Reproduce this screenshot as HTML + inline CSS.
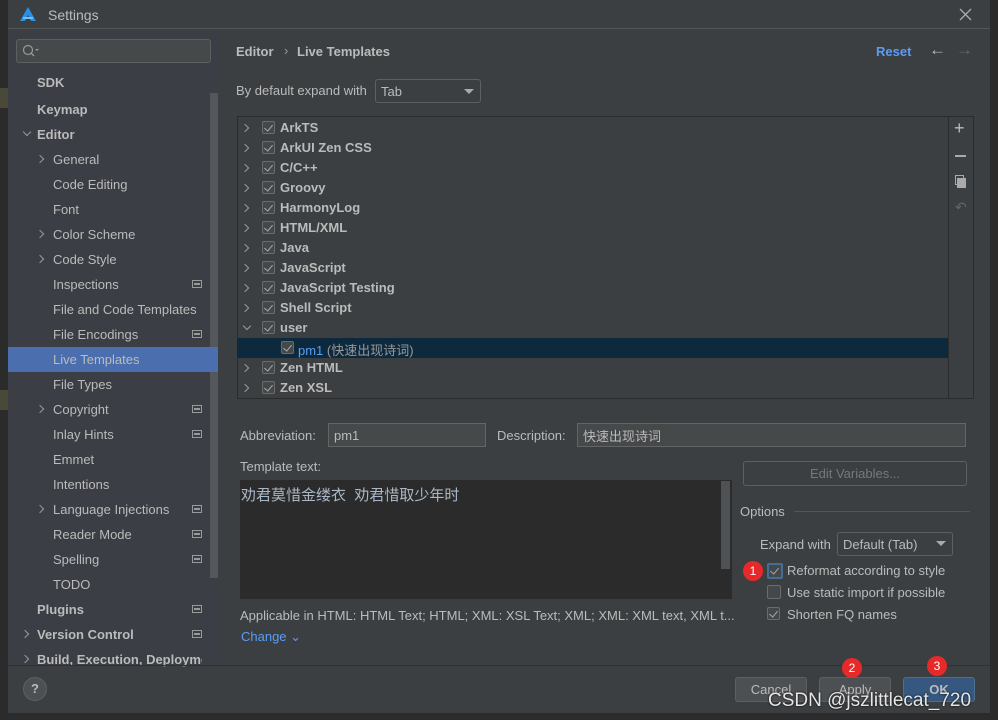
<!DOCTYPE html>
<html><head><meta charset="utf-8"><style>
*{margin:0;padding:0;box-sizing:border-box}
body{width:998px;height:720px;overflow:hidden;background:#2b2b2b;font-family:"Liberation Sans","Noto Sans CJK SC",sans-serif;font-size:13px;color:#bbbbbb;position:relative}
.a{position:absolute;white-space:nowrap}
.b{font-weight:bold}
.dlg{position:absolute;left:8px;top:0;width:982px;height:713px;background:#3c3f41}
.side{position:absolute;left:8px;top:29px;width:211px;height:636px;background:#3b3e44}
.cb{position:absolute;width:13px;height:13px;border:1px solid #6b6b6b;border-radius:2px;background:#43494a}
.cb:after{content:"";position:absolute;left:3px;top:1px;width:4px;height:7px;border:solid #aaa;border-width:0 1.5px 1.5px 0;transform:rotate(40deg)}
.chev{position:absolute;width:6px;height:6px;border:solid #999;border-width:0 1.3px 1.3px 0;transform:rotate(-45deg)}
.chevd{position:absolute;width:6px;height:6px;border:solid #999;border-width:0 1.3px 1.3px 0;transform:rotate(45deg)}
.ic{position:absolute;left:192px;width:10px;height:8px;border:1px solid #999}
.ic:after{content:"";position:absolute;left:1px;top:2px;width:6px;height:2px;background:#999}
.btn{position:absolute;height:25px;border:1px solid #5e6060;border-radius:3px;background:#4c5052;text-align:center;line-height:23px}
.dot{position:absolute;width:20px;height:20px;border-radius:50%;background:#e8292a;color:#fff;font-size:12px;text-align:center;line-height:20px}
</style></head><body>
<div class="a" style="left:0;top:88px;width:8px;height:20px;background:#4a4836"></div>
<div class="a" style="left:0;top:390px;width:8px;height:20px;background:#4a4836"></div>
<div class="dlg"></div>
<div class="a" style="left:8px;top:28px;width:982px;height:1px;background:#555"></div>
<svg class="a" style="left:20px;top:7px" width="16" height="14"><path d="M8 0L0 14h5l3-6 3 6h5z" fill="#2a8fe0"/><path d="M3 11h10" stroke="#6cc1ff" stroke-width="2"/></svg>
<div class="a" style="left:48px;top:7px;font-size:14px">Settings</div>
<svg class="a" style="left:959px;top:8px" width="13" height="13"><path d="M1 1L12 12M12 1L1 12" stroke="#aaa" stroke-width="1.3"/></svg>
<div class="side"></div>
<div class="a" style="left:16px;top:39px;width:195px;height:24px;border:1px solid #5e6060;border-radius:3px;background:#45494a"></div>
<svg class="a" style="left:22px;top:44px" width="18" height="14"><circle cx="6" cy="6" r="4.5" stroke="#999" fill="none" stroke-width="1.2"/><path d="M9 9l3 3" stroke="#999" stroke-width="1.3"/><path d="M13 5h4l-2 2z" fill="#999"/></svg>
<div class="a" style="left:210px;top:93px;width:8px;height:485px;background:#55585b"></div>
<div class="a" style="left:8px;top:347px;width:210px;height:25px;background:#4b6eaf"></div>
<div class="a b" style="left:37px;top:75px">SDK</div>
<div class="a b" style="left:37px;top:102px">Keymap</div>
<div class="chevd" style="left:24px;top:129px"></div>
<div class="a b" style="left:37px;top:127px">Editor</div>
<div class="chev" style="left:37px;top:156px"></div><div class="a" style="left:53px;top:152px">General</div>
<div class="a" style="left:53px;top:177px">Code Editing</div>
<div class="a" style="left:53px;top:202px">Font</div>
<div class="chev" style="left:37px;top:231px"></div><div class="a" style="left:53px;top:227px">Color Scheme</div>
<div class="chev" style="left:37px;top:256px"></div><div class="a" style="left:53px;top:252px">Code Style</div>
<div class="a" style="left:53px;top:277px">Inspections</div><div class="ic" style="top:280px"></div>
<div class="a" style="left:53px;top:302px">File and Code Templates</div>
<div class="a" style="left:53px;top:327px">File Encodings</div><div class="ic" style="top:330px"></div>
<div class="a" style="left:53px;top:352px">Live Templates</div>
<div class="a" style="left:53px;top:377px">File Types</div>
<div class="chev" style="left:37px;top:406px"></div><div class="a" style="left:53px;top:402px">Copyright</div><div class="ic" style="top:405px"></div>
<div class="a" style="left:53px;top:427px">Inlay Hints</div><div class="ic" style="top:430px"></div>
<div class="a" style="left:53px;top:452px">Emmet</div>
<div class="a" style="left:53px;top:477px">Intentions</div>
<div class="chev" style="left:37px;top:506px"></div><div class="a" style="left:53px;top:502px">Language Injections</div><div class="ic" style="top:505px"></div>
<div class="a" style="left:53px;top:527px">Reader Mode</div><div class="ic" style="top:530px"></div>
<div class="a" style="left:53px;top:552px">Spelling</div><div class="ic" style="top:555px"></div>
<div class="a" style="left:53px;top:577px">TODO</div>
<div class="a b" style="left:37px;top:602px">Plugins</div><div class="ic" style="top:605px"></div>
<div class="chev" style="left:22px;top:631px"></div><div class="a b" style="left:37px;top:627px">Version Control</div><div class="ic" style="top:630px"></div>
<div class="chev" style="left:22px;top:656px"></div><div class="a b" style="left:37px;top:652px;width:165px;overflow:hidden">Build, Execution, Deployment</div>
<div class="a b" style="left:236px;top:44px">Editor</div>
<div class="a" style="left:284px;top:43px;color:#999">›</div>
<div class="a b" style="left:297px;top:44px">Live Templates</div>
<div class="a b" style="left:876px;top:44px;color:#589df6">Reset</div>
<div class="a" style="left:929px;top:40px;font-size:17px;color:#bbb">←</div>
<div class="a" style="left:956px;top:40px;font-size:17px;color:#666">→</div>
<div class="a" style="left:236px;top:83px">By default expand with</div>
<div class="a" style="left:375px;top:79px;width:106px;height:24px;border:1px solid #5e6060;border-radius:3px;background:#3c3f41"></div>
<div class="a" style="left:381px;top:84px">Tab</div>
<div class="a" style="left:464px;top:89px;border:5px solid transparent;border-top:5px solid #aaa"></div>
<div class="a" style="left:237px;top:116px;width:737px;height:283px;border:1px solid #2b2b2b;background:#3c3f41"></div>
<div class="a" style="left:948px;top:117px;width:1px;height:281px;background:#2b2b2b"></div>
<div class="a" style="left:237px;top:338px;width:711px;height:20px;background:#0d293e"></div>
<div id="tree"></div>
<div class="a" style="left:954px;top:118px;font-size:18px;color:#bbb">+</div>
<div class="a" style="left:955px;top:155px;width:11px;height:2px;background:#aaa"></div>
<div class="a" style="left:955px;top:175px;width:9px;height:10px;border:1.5px solid #aaa"></div>
<div class="a" style="left:957px;top:178px;width:9px;height:10px;background:#aaa"></div>
<div class="a" style="left:955px;top:199px;font-size:14px;color:#666">↶</div>
<div class="a" style="left:240px;top:428px">Abbreviation:</div>
<div class="a" style="left:328px;top:423px;width:158px;height:24px;border:1px solid #646464;background:#45494a"></div>
<div class="a" style="left:334px;top:428px">pm1</div>
<div class="a" style="left:497px;top:428px">Description:</div>
<div class="a" style="left:577px;top:423px;width:389px;height:24px;border:1px solid #646464;background:#45494a"></div>
<div class="a" style="left:583px;top:426px">快速出现诗词</div>
<div class="a" style="left:240px;top:459px">Template text:</div>
<div class="a" style="left:240px;top:480px;width:492px;height:119px;background:#2b2b2b"></div>
<div class="a" style="left:721px;top:481px;width:9px;height:88px;background:#4f5254"></div>
<div class="a" style="left:241px;top:484px;font-size:15px;color:#a9b7c6">劝君莫惜金缕衣&nbsp; 劝君惜取少年时</div>
<div class="btn" style="left:743px;top:461px;width:224px;color:#777;background:#3c3f41">Edit Variables...</div>
<div class="a" style="left:740px;top:504px">Options</div>
<div class="a" style="left:794px;top:511px;width:176px;height:1px;background:#555"></div>
<div class="a" style="left:760px;top:537px">Expand with</div>
<div class="a" style="left:837px;top:532px;width:116px;height:24px;border:1px solid #5e6060;border-radius:3px"></div>
<div class="a" style="left:843px;top:537px">Default (Tab)</div>
<div class="a" style="left:936px;top:541px;border:5px solid transparent;border-top:5px solid #aaa"></div>
<div class="cb" style="left:767px;top:563px;border:2px solid #466d94;width:16px;height:16px"></div>
<div class="a" style="left:787px;top:563px">Reformat according to style</div>
<div class="a" style="left:767px;top:585px;width:14px;height:14px;border:1px solid #6b6b6b;border-radius:2px;background:#43494a"></div>
<div class="a" style="left:787px;top:585px">Use static import if possible</div>
<div class="cb" style="left:767px;top:607px"></div>
<div class="a" style="left:787px;top:607px">Shorten FQ names</div>
<div class="a" style="left:240px;top:608px">Applicable in HTML: HTML Text; HTML; XML: XSL Text; XML; XML: XML text, XML t...</div>
<div class="a" style="left:241px;top:629px;color:#589df6">Change ⌄</div>
<div class="a" style="left:8px;top:665px;width:982px;height:1px;background:#2f3133"></div>
<div class="a" style="left:23px;top:677px;width:24px;height:24px;border-radius:50%;background:#4c5052;border:1px solid #5e6060;text-align:center;line-height:22px;font-weight:bold;color:#bbb">?</div>
<div class="btn" style="left:735px;top:677px;width:72px">Cancel</div>
<div class="btn" style="left:819px;top:677px;width:72px">Apply</div>
<div class="btn b" style="left:903px;top:677px;width:72px;background:#365880;border-color:#4c708c">OK</div>
<div class="dot" style="left:743px;top:561px">1</div>
<div class="dot" style="left:842px;top:658px">2</div>
<div class="dot" style="left:927px;top:656px">3</div>
<div class="a" style="left:768px;top:690px;font-size:19px;color:#e6e6e6;text-shadow:0 0 2px #000">CSDN @jszlittlecat_720</div>
<div class="a" style="left:0;top:713px;width:998px;height:7px;background:#2b2b2b"></div>
<script>
var rows=["ArkTS","ArkUI Zen CSS","C/C++","Groovy","HarmonyLog","HTML/XML","Java","JavaScript","JavaScript Testing","Shell Script","user","pm1","Zen HTML","Zen XSL"];
var h="";rows.forEach(function(r,i){var y=118+i*20;
if(r=="pm1"){h+='<div class="cb" style="left:281px;top:'+(y+3)+'px"></div><div class="a" style="left:298px;top:'+(y+2)+'px;color:#589df6">pm1 <span style="color:#999">(快速出现诗词)</span></div>';return;}
h+=(r=="user"?'<div class="chevd" style="left:244px;top:'+(y+5)+'px"></div>':'<div class="chev" style="left:242px;top:'+(y+7)+'px"></div>');
h+='<div class="cb" style="left:262px;top:'+(y+3)+'px"></div><div class="a b" style="left:280px;top:'+(y+2)+'px">'+r+'</div>';});
document.getElementById("tree").innerHTML=h;
</script>
</body></html>
